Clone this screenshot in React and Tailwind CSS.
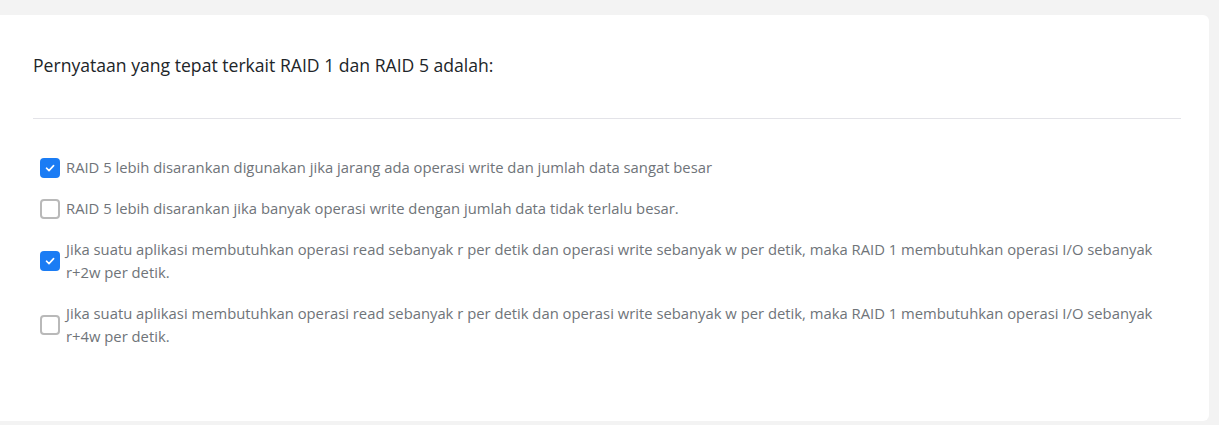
import React from 'react';

const options = [
  {
    text: 'RAID 5 lebih disarankan digunakan jika jarang ada operasi write dan jumlah data sangat besar',
    checked: true,
  },
  {
    text: 'RAID 5 lebih disarankan jika banyak operasi write dengan jumlah data tidak terlalu besar.',
    checked: false,
  },
  {
    text: 'Jika suatu aplikasi membutuhkan operasi read sebanyak r per detik dan operasi write sebanyak w per detik, maka RAID 1 membutuhkan operasi I/O sebanyak r+2w per detik.',
    checked: true,
  },
  {
    text: 'Jika suatu aplikasi membutuhkan operasi read sebanyak r per detik dan operasi write sebanyak w per detik, maka RAID 1 membutuhkan operasi I/O sebanyak r+4w per detik.',
    checked: false,
  },
];

const CheckBox = ({ checked }) =>
  checked ? (
    <span className="flex h-5 w-5 shrink-0 items-center justify-center rounded-[4px] bg-[#1b7cf4]">
      <svg width="12" height="12" viewBox="0 0 12 12" fill="none">
        <path d="M2.5 6.2 L5 8.6 L9.6 3.6" stroke="white" strokeWidth="1.6" strokeLinecap="round" strokeLinejoin="round" />
      </svg>
    </span>
  ) : (
    <span className="h-5 w-5 shrink-0 rounded-[4px] border-2 border-[#b9b9b9] bg-white" />
  );

const App = () => {
  return (
    <div className="h-[425px] bg-[#f3f3f3] pt-[15px] font-['Open_Sans',sans-serif]">
      <div className="mr-[10px] h-[406px] rounded-r-md bg-white pl-[33px] pr-[28px]">
        <div className="pt-[37px] pb-[40px] text-[17.6px] leading-[26px] text-[#212529]">
          Pernyataan yang tepat terkait RAID 1 dan RAID 5 adalah:
        </div>
        <div className="border-t border-[#e3e3e8]" />
        <div className="flex flex-col gap-[18px] pt-[37px] pl-[7px]">
          {options.map((opt, i) => (
            <label key={i} className="flex items-center gap-[6px]">
              <CheckBox checked={opt.checked} />
              <span className="pr-[10px] text-[14.8px] leading-[23px] text-[#6f7479]">
                {opt.text}
              </span>
            </label>
          ))}
        </div>
      </div>
    </div>
  );
};

export default App;
